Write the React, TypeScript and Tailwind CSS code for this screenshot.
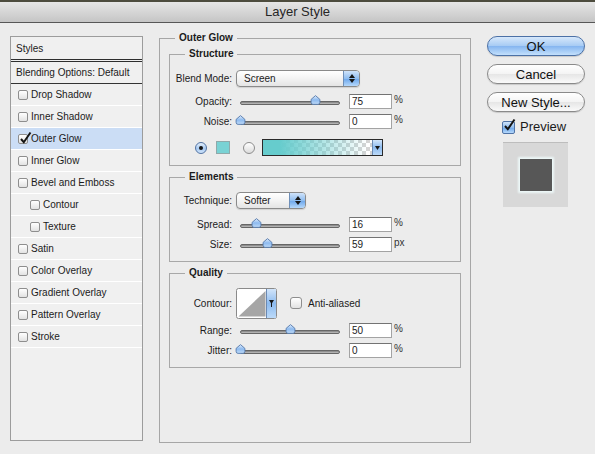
import React from "react";
import clsx from "clsx";

// Layer Style dialog, "Outer Glow" page

type StyleItem = {
    label: string;
    checked?: boolean;
    selected?: boolean;
    indent?: boolean;
};

const STYLE_ITEMS: StyleItem[] = [
    { label: "Drop Shadow" },
    { label: "Inner Shadow" },
    { label: "Outer Glow", checked: true, selected: true },
    { label: "Inner Glow" },
    { label: "Bevel and Emboss" },
    { label: "Contour", indent: true },
    { label: "Texture", indent: true },
    { label: "Satin" },
    { label: "Color Overlay" },
    { label: "Gradient Overlay" },
    { label: "Pattern Overlay" },
    { label: "Stroke" },
];

export default function App() {
    return (
        <div className="flex h-[454px] w-[595px] flex-col overflow-hidden bg-[#ececec] font-['Liberation_Sans',Arial,sans-serif] text-[10px] text-[#1b1b1b]">
            <TitleBar />
            <div className="flex items-start gap-[16px] pl-[10px] pt-[9px]">
                <StyleList />
                <OuterGlowPanel />
                <ActionColumn />
            </div>
        </div>
    );
}

function TitleBar() {
    return (
        <div className="flex h-[23px] shrink-0 items-center justify-center border-t-2 border-b border-t-[#4d4c3e] border-b-[#575757] bg-[linear-gradient(to_bottom,#e6e6e6,#c5c5c5)] text-[13px] text-[#262626]">
            Layer Style
        </div>
    );
}

function StyleList() {
    return (
        <div className="mt-[4px] flex h-[405px] w-[133px] shrink-0 flex-col border border-[#9c9c9c] bg-[#f0f0f0]">
            <div className="flex h-[22px] items-center pl-[5px]">Styles</div>
            <div className="h-[3px] border-y border-[#2e2e2e]" />
            <div className="flex h-[22px] items-center border-b border-[#333333] pl-[5px]">
                Blending Options: Default
            </div>
            {STYLE_ITEMS.map((item) => (
                <div
                    key={item.label}
                    className={clsx(
                        "flex h-[22px] items-center gap-[3px] border-b border-white",
                        item.indent ? "pl-[19px]" : "pl-[7px]",
                        item.selected && "bg-[#cbddf5]"
                    )}
                >
                    <CheckBox checked={item.checked} className="h-[10px] w-[10px]" />
                    <span>{item.label}</span>
                </div>
            ))}
        </div>
    );
}

function CheckBox({
    checked,
    aqua,
    className,
}: {
    checked?: boolean;
    aqua?: boolean;
    className?: string;
}) {
    return (
        <span
            className={clsx(
                "relative inline-block shrink-0 rounded-[2px] border",
                aqua
                    ? "border-[#4f73a6] bg-[linear-gradient(to_bottom,#cfe3fa,#8fbdf0_50%,#6aa5eb_51%,#b5d8fb)]"
                    : "border-[#8e8e8e] bg-[linear-gradient(to_bottom,#ffffff,#e2e2e2)]",
                className
            )}
        >
            {checked && (
                <svg
                    className="absolute left-[0px] top-[-4px]"
                    width="13"
                    height="14"
                    viewBox="0 0 13 14"
                >
                    <path d="M2 8 L4.8 11.2 L11.5 1.5" fill="none" stroke="#141414" strokeWidth="2" />
                </svg>
            )}
        </span>
    );
}

function Group({
    title,
    className,
    children,
}: {
    title: string;
    className?: string;
    children: React.ReactNode;
}) {
    return (
        <fieldset className={clsx("border border-[#a8a8a8] pb-[9px] pl-[2px] pr-[9px]", className)}>
            <legend className="ml-[13px] px-[4px] text-[10px] font-bold leading-[12px]">{title}</legend>
            {children}
        </fieldset>
    );
}

function OuterGlowPanel() {
    return (
        <fieldset className="h-[411px] w-[312px] shrink-0 border border-[#a6a6a6] px-[9px] pt-[4px]">
            <legend className="ml-[6px] px-[4px] text-[10px] font-bold leading-[12px]">Outer Glow</legend>

            {/* Structure */}
            <Group title="Structure" className="pt-[9px]">
                <Row label="Blend Mode:" className="h-[18px]">
                    <Select value="Screen" className="w-[124px]" />
                </Row>
                <SliderRow label="Opacity:" value="75" pct={75} unit="%" className="mt-[6px]" />
                <SliderRow label="Noise:" value="0" pct={0} unit="%" className="mt-[4px]" />
                <div className="mt-[10px] flex h-[17px] items-center pl-[23px]">
                    <Radio on />
                    <span className="ml-[9px] h-[13px] w-[14px] border border-[#8fa9aa] bg-[#79d2d4]" />
                    <Radio className="ml-[13px]" />
                    <GradientBar />
                </div>
            </Group>

            {/* Elements */}
            <Group title="Elements" className="mt-[5px] pt-[8px]">
                <Row label="Technique:" className="h-[18px]">
                    <Select value="Softer" className="w-[70px]" />
                </Row>
                <SliderRow label="Spread:" value="16" pct={16} unit="%" className="mt-[7px]" />
                <SliderRow label="Size:" value="59" pct={27} unit="px" className="mt-[4px]" />
            </Group>

            {/* Quality */}
            <Group title="Quality" className="mt-[5px] pt-[9px]">
                <Row label="Contour:" className="h-[30px]">
                    <ContourPicker />
                    <CheckBox className="ml-[9px] h-[12px] w-[12px] rounded-[3px]" />
                    <span className="ml-[2px]">Anti-aliased</span>
                </Row>
                <SliderRow label="Range:" value="50" pct={50} unit="%" className="mt-[4px]" />
                <SliderRow label="Jitter:" value="0" pct={0} unit="%" className="mt-[4px]" />
            </Group>
        </fieldset>
    );
}

function Row({
    label,
    className,
    children,
}: {
    label: string;
    className?: string;
    children: React.ReactNode;
}) {
    return (
        <div className={clsx("flex items-center gap-[4px]", className)}>
            <span className="w-[60px] shrink-0 whitespace-nowrap text-right">{label}</span>
            {children}
        </div>
    );
}

function SliderRow({
    label,
    value,
    pct,
    unit,
    className,
}: {
    label: string;
    value: string;
    pct: number;
    unit: string;
    className?: string;
}) {
    return (
        <Row label={label} className={clsx("h-[16px]", className)}>
            <div className="relative flex h-[16px] w-[108px] shrink-0 items-center px-[4px]">
                <div className="mt-[3px] h-[4px] w-full rounded-full border border-[#666666] bg-[linear-gradient(to_bottom,#7e7e7e,#c2c2c2)]" />
                <span className="absolute top-[2px]" style={{ left: 4 + pct - 5.5 }}>
                    <Thumb />
                </span>
            </div>
            <input
                readOnly
                value={value}
                className="ml-[1px] h-[15px] w-[43px] border border-[#a3a3a3] border-t-[#737373] bg-white pl-[2px] text-[10px] leading-[13px] outline-none"
            />
            <span className="ml-[-2px] mb-[3px] text-[10px] text-[#333333]">{unit}</span>
        </Row>
    );
}

function Thumb() {
    return (
        <svg width="11" height="10" viewBox="0 0 11 10" className="block">
            <defs>
                <linearGradient id="thumbFill" x1="0" y1="0" x2="0" y2="1">
                    <stop offset="0" stopColor="#e0edfc" />
                    <stop offset="0.5" stopColor="#8dbaef" />
                    <stop offset="1" stopColor="#c0dbf8" />
                </linearGradient>
            </defs>
            <path
                d="M5.5 0.6 L9.9 4.4 V7.4 Q9.9 9.4 7.9 9.4 H3.1 Q1.1 9.4 1.1 7.4 V4.4 Z"
                fill="url(#thumbFill)"
                stroke="#5578aa"
                strokeWidth="0.9"
            />
        </svg>
    );
}

function Select({ value, className }: { value: string; className?: string }) {
    return (
        <div
            className={clsx(
                "flex h-[17px] shrink-0 items-stretch rounded-[4px] border border-[#8a8a8a] bg-[linear-gradient(to_bottom,#ffffff,#f3f3f3_50%,#e4e4e4)] shadow-[0_1px_1px_rgba(0,0,0,0.12)]",
                className
            )}
        >
            <span className="flex-1 pl-[7px] leading-[15px]">{value}</span>
            <span className="flex w-[16px] flex-col items-center justify-center gap-[1px] rounded-r-[3px] border-l border-[#6f8fb8] bg-[linear-gradient(to_bottom,#cfe3fa,#8fbdf0_50%,#6aa5eb_51%,#b5d8fb)]">
                <svg width="6" height="4" viewBox="0 0 6 4">
                    <path d="M3 0 L6 4 H0 Z" fill="#161616" />
                </svg>
                <svg width="6" height="4" viewBox="0 0 6 4">
                    <path d="M0 0 H6 L3 4 Z" fill="#161616" />
                </svg>
            </span>
        </div>
    );
}

function Radio({ on, className }: { on?: boolean; className?: string }) {
    return (
        <span
            className={clsx(
                "flex h-[12px] w-[12px] shrink-0 items-center justify-center rounded-full border",
                on
                    ? "border-[#5273a3] bg-[linear-gradient(to_bottom,#e4effb,#a9cbf2_55%,#cfe3fa)]"
                    : "border-[#8d8d8d] bg-[linear-gradient(to_bottom,#ffffff,#dcdcdc)]",
                className
            )}
        >
            {on && <span className="h-[4px] w-[4px] rounded-full bg-[#141414]" />}
        </span>
    );
}

function GradientBar() {
    return (
        <svg width="121" height="17" viewBox="0 0 121 17" className="ml-[7px] block shrink-0">
            <defs>
                <pattern id="checker" width="8" height="8" patternUnits="userSpaceOnUse">
                    <rect width="8" height="8" fill="#ffffff" />
                    <rect width="4" height="4" fill="#d4d4d4" />
                    <rect x="4" y="4" width="4" height="4" fill="#d4d4d4" />
                </pattern>
                <linearGradient id="glowFade" x1="0" y1="0" x2="1" y2="0">
                    <stop offset="0" stopColor="#66cccd" />
                    <stop offset="0.15" stopColor="#66cccd" />
                    <stop offset="0.95" stopColor="#66cccd" stopOpacity="0" />
                </linearGradient>
                <linearGradient id="barArrow" x1="0" y1="0" x2="0" y2="1">
                    <stop offset="0" stopColor="#d2e5fa" />
                    <stop offset="0.5" stopColor="#8dbbef" />
                    <stop offset="1" stopColor="#bcdaf9" />
                </linearGradient>
            </defs>
            <rect x="1" y="1" width="110" height="15" fill="url(#checker)" />
            <rect x="1" y="1" width="110" height="15" fill="url(#glowFade)" />
            <rect x="111" y="1" width="9" height="15" fill="url(#barArrow)" />
            <path d="M113 7 H118 L115.5 11 Z" fill="#161616" />
            <rect x="0.5" y="0.5" width="120" height="16" fill="none" stroke="#2a2a2a" />
            <line x1="110.5" y1="1" x2="110.5" y2="16" stroke="#6b8ab3" />
        </svg>
    );
}

function ContourPicker() {
    return (
        <svg width="41" height="31" viewBox="0 0 41 31" className="block shrink-0">
            <defs>
                <linearGradient id="contourArrow" x1="0" y1="0" x2="0" y2="1">
                    <stop offset="0" stopColor="#d2e5fa" />
                    <stop offset="0.5" stopColor="#8dbbef" />
                    <stop offset="1" stopColor="#bcdaf9" />
                </linearGradient>
            </defs>
            <rect x="0.5" y="0.5" width="40" height="30" rx="2" fill="#ffffff" stroke="#8a8a8a" />
            <path d="M2.5 28.5 L29.5 3 V28.5 Z" fill="#a6a6a6" />
            <rect x="30.5" y="1" width="9.5" height="29" fill="url(#contourArrow)" />
            <line x1="30.5" y1="1" x2="30.5" y2="30" stroke="#6b8ab3" />
            <path d="M33 12 H38 L35.5 16 Z" fill="#161616" />
            <rect x="35" y="15" width="1" height="4" fill="#161616" />
        </svg>
    );
}

function AquaButton({
    primary,
    className,
    children,
}: {
    primary?: boolean;
    className?: string;
    children: React.ReactNode;
}) {
    return (
        <button
            className={clsx(
                "h-[20px] w-[98px] rounded-full border text-[13px] leading-none text-[#111111] shadow-[0_1px_1px_rgba(0,0,0,0.15)]",
                primary
                    ? "border-[#4c71a6] bg-[linear-gradient(to_bottom,#d7e8fb,#a8ccf4_48%,#86b6f0_52%,#c3e0fc)]"
                    : "border-[#8a8a8a] bg-[linear-gradient(to_bottom,#ffffff,#f4f4f4_48%,#e6e6e6_52%,#fafafa)]",
                className
            )}
        >
            {children}
        </button>
    );
}

function ActionColumn() {
    return (
        <div className="mt-[4px] flex w-[98px] shrink-0 flex-col">
            <AquaButton primary>OK</AquaButton>
            <AquaButton className="mt-[8px]">Cancel</AquaButton>
            <AquaButton className="mt-[8px]">New Style...</AquaButton>
            <div className="mt-[8px] flex h-[14px] items-center gap-[5px] pl-[15px] text-[13px]">
                <CheckBox aqua checked className="h-[13px] w-[13px]" />
                <span>Preview</span>
            </div>
            <div className="ml-[16px] mt-[8px] flex h-[65px] w-[65px] items-center justify-center border-t border-[#bdbdbd] bg-[#d8d8d8]">
                <div className="h-[32px] w-[32px] bg-[#575757] shadow-[0_0_2px_2px_rgba(240,252,252,0.9)]" />
            </div>
        </div>
    );
}
